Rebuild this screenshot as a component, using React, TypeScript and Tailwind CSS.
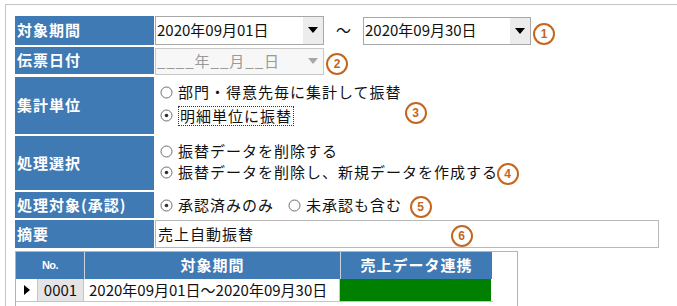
import React from "react";

const Mark = ({ n, className = "" }: { n: string; className?: string }) => (
  <div
    className={`w-[22px] h-[22px] rounded-full border-2 border-[#c4661f] text-[#c4661f] font-bold text-[12px] leading-none flex items-center justify-center font-['Liberation_Sans',sans-serif] bg-transparent ${className}`}
  >
    {n}
  </div>
);

const Radio = ({ on }: { on?: boolean }) => (
  <svg width="13" height="13" viewBox="0 0 13 13" className="shrink-0">
    <circle cx="6.5" cy="6.5" r="5.5" fill="white" stroke="#6b6b6b" strokeWidth="1" />
    {on && <circle cx="6.5" cy="6.5" r="1.8" fill="#333" />}
  </svg>
);

const Arrow = ({ color }: { color: string }) => (
  <svg width="10" height="6" viewBox="0 0 10 6">
    <polygon points="0,0 10,0 5,6" fill={color} />
  </svg>
);

const Label = ({ text, h }: { text: string; h: string }) => (
  <div className={`w-[139px] ${h} bg-[#3f7ab4] text-white font-bold text-[15px] tracking-[1px] pl-[2px] flex items-center shrink-0`}>
    {text}
  </div>
);

export default function App() {
  return (
    <div className="w-[677px] h-[306px] overflow-hidden bg-white font-['Noto_Sans_CJK_JP','Noto_Sans',sans-serif] text-[#111]">
      <div className="ml-[5px] mt-[4px] border-t border-l border-[#c4c4c4] pl-[9px] pt-[11px] h-[310px]">
        <div className="flex flex-col gap-[2px]">
          {/* Row 1 */}
          <div className="flex gap-[1px]">
            <Label text="対象期間" h="h-[29px]" />
            <div className="flex items-center">
              <div className="w-[169px] h-[29px] border border-[#a8a8a8] bg-white flex items-center -mt-[1px]">
                <span className="pl-[1px] text-[15px] flex-1">2020年09月01日</span>
                <div className="w-[20px] h-full bg-[#ececec] flex items-center justify-center">
                  <Arrow color="#000" />
                </div>
              </div>
              <span className="w-[39px] text-center text-[15px]">〜</span>
              <div className="w-[168px] h-[28px] border border-[#a8a8a8] bg-white flex items-center">
                <span className="pl-[1px] text-[15px] flex-1">2020年09月30日</span>
                <div className="w-[20px] h-full bg-[#ececec] flex items-center justify-center">
                  <Arrow color="#000" />
                </div>
              </div>
              <Mark n="1" className="ml-[2px] mt-[6px]" />
            </div>
          </div>
          {/* Row 2 */}
          <div className="flex gap-[1px]">
            <Label text="伝票日付" h="h-[27px]" />
            <div className="flex items-center">
              <div className="w-[169px] h-[27px] border border-[#c8c8c8] bg-[#f7f7f7] flex items-center text-[#9a9a9a]">
                <span className="pl-[1px] text-[15px] flex-1 tracking-[1px]">____年__月__日</span>
                <div className="w-[20px] h-full flex items-center justify-center">
                  <Arrow color="#a8a8a8" />
                </div>
              </div>
              <Mark n="2" className="ml-[2px] mt-[6px]" />
            </div>
          </div>
          {/* Row 3 */}
          <div className="flex gap-[1px]">
            <Label text="集計単位" h="h-[57px]" />
            <div className="relative flex-1 flex flex-col justify-center pl-[5px] text-[15px] tracking-[1px] gap-[3px] -mt-[3px]">
              <div className="flex items-center gap-[5px] h-[20px]">
                <Radio />
                <span>部門・得意先毎に集計して振替</span>
              </div>
              <div className="flex items-center gap-[5px] h-[20px]">
                <Radio on />
                <span className="border border-dotted border-[#333] px-[1px] leading-[18px]">明細単位に振替</span>
              </div>
              <Mark n="3" className="absolute left-[250px] top-[28px]" />
            </div>
          </div>
          {/* Row 4 */}
          <div className="flex gap-[1px]">
            <Label text="処理選択" h="h-[54px]" />
            <div className="flex-1 flex flex-col justify-center pl-[5px] text-[15px] tracking-[1px] gap-[1px] -mt-[3px]">
              <div className="flex items-center gap-[5px] h-[20px]">
                <Radio />
                <span>振替データを削除する</span>
              </div>
              <div className="flex items-center gap-[5px] h-[20px]">
                <Radio on />
                <span>振替データを削除し、新規データを作成する</span>
                <Mark n="4" className="-ml-[6px] mt-[4px]" />
              </div>
            </div>
          </div>
          {/* Row 5 */}
          <div className="flex gap-[1px]">
            <Label text="処理対象(承認)" h="h-[26px]" />
            <div className="flex items-center pl-[5px] text-[15px] tracking-[1px]">
              <Radio on />
              <span className="ml-[5px]">承認済みのみ</span>
              <span className="ml-[14px]"><Radio /></span>
              <span className="ml-[5px]">未承認も含む</span>
              <Mark n="5" className="ml-[8px] mt-[4px]" />
            </div>
          </div>
          {/* Row 6 */}
          <div className="flex gap-[1px]">
            <Label text="摘要" h="h-[28px]" />
            <div className="relative w-[504px] h-[28px] border border-[#b8b8b8] bg-white flex items-center pl-[2px] text-[15px] tracking-[1px]">
              売上自動振替
              <Mark n="6" className="absolute left-[295px] top-[4px]" />
            </div>
          </div>
        </div>
        {/* Table */}
        <div className="mt-[3px] w-[503px] h-[70px] border border-[#b4b4b4] bg-white">
          <div className="flex h-[27px] text-white font-bold">
            <div className="w-[68px] bg-[#3f7ab4] flex items-center justify-center text-[11px] font-['Liberation_Sans',sans-serif] tracking-[-0.5px]">No.</div>
            <div className="w-[1px] bg-[#c9d3de]" />
            <div className="w-[255px] bg-[#3f7ab4] flex items-center justify-center text-[15px] tracking-[1px]">対象期間</div>
            <div className="w-[1px] bg-[#c9d3de]" />
            <div className="w-[151px] bg-[#3f7ab4] flex items-center justify-center text-[15px] tracking-[1px]">売上データ連携</div>
          </div>
          <div className="flex h-[23px] border-b border-[#c4c4c4] w-[477px]">
            <div className="w-[22px] border-r border-[#c4c4c4] flex items-center justify-center">
              <svg width="6" height="10" viewBox="0 0 6 10">
                <polygon points="0,0 6,5 0,10" fill="#000" />
              </svg>
            </div>
            <div className="w-[46px] bg-[#e4e4e4] border-r border-[#c4c4c4] flex items-center justify-center text-[15px]">0001</div>
            <div className="w-[256px] border-r border-[#c4c4c4] flex items-center pl-[5px] text-[15px]">2020年09月01日～2020年09月30日</div>
            <div className="w-[151px] bg-[#008000]" />
          </div>
        </div>
      </div>
    </div>
  );
}
